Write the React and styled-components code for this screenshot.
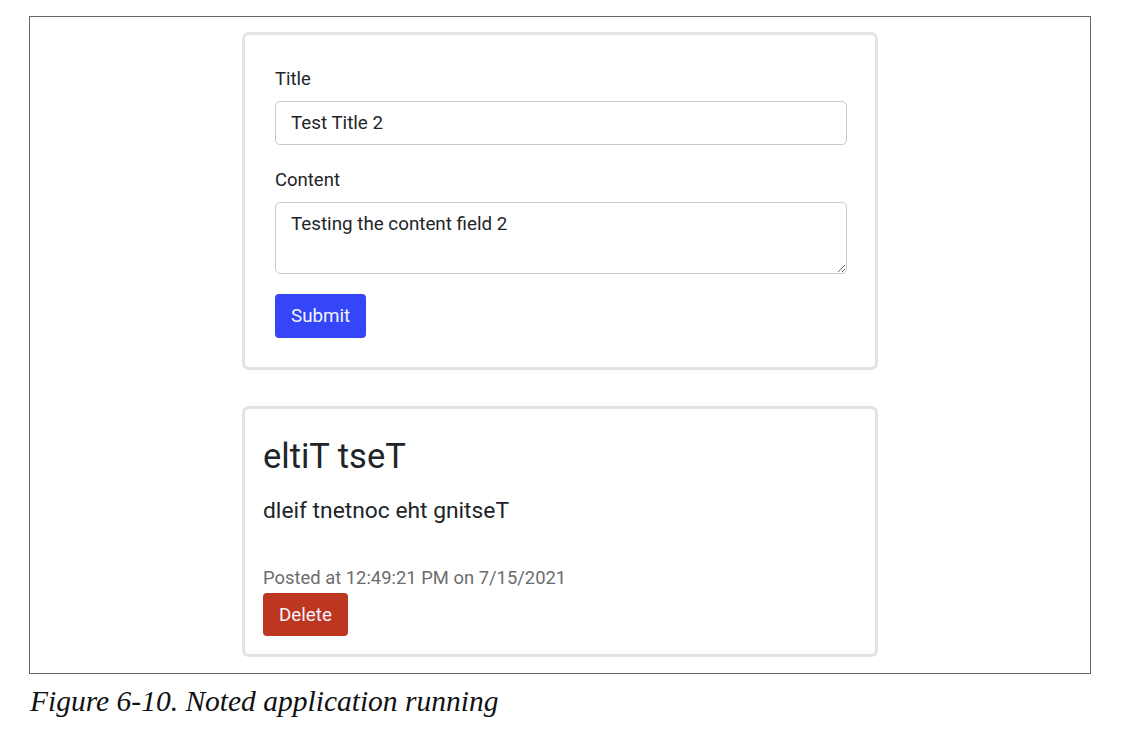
import React from 'react';
import styled, { createGlobalStyle } from 'styled-components';

const GlobalStyle = createGlobalStyle`
  body {
    margin: 0;
    background: #ffffff;
  }
`;

const Page = styled.div`
  padding: 16px 0 0 29px;
`;

const Frame = styled.div`
  width: 1062px;
  height: 658px;
  box-sizing: border-box;
  border: 1px solid #666666;
  display: flex;
  flex-direction: column;
  align-items: center;
  gap: 36px;
  padding-top: 15px;
  font-family: Roboto, 'Helvetica Neue', Arial, sans-serif;
  color: #212529;
`;

const Card = styled.div`
  width: 636px;
  box-sizing: border-box;
  border: 3px solid #e3e3e3;
  border-radius: 7px;
  padding: ${(p) => p.pad};
  display: flex;
  flex-direction: column;
`;

const Label = styled.label`
  font-size: 18.5px;
  line-height: 27px;
  margin-bottom: 8px;
  margin-top: ${(p) => p.top || 0}px;
  padding-top: 1px;
`;

const Input = styled.input`
  height: 44px;
  box-sizing: border-box;
  border: 1px solid #c5c9d0;
  border-radius: 5px;
  padding: 0 15px;
  font-family: inherit;
  font-size: 18.8px;
  color: #212529;
  outline: none;
`;

const TextArea = styled.textarea`
  height: 72px;
  box-sizing: border-box;
  border: 1px solid #c5c9d0;
  border-radius: 5px;
  padding: 9px 15px;
  font-family: inherit;
  font-size: 18.8px;
  line-height: 24px;
  color: #212529;
  resize: vertical;
  outline: none;
`;

const Button = styled.button`
  align-self: flex-start;
  height: ${(p) => p.h}px;
  padding: 0 16px;
  border: none;
  border-radius: 4px;
  background: ${(p) => p.bg};
  color: #f2f4ff;
  font-family: inherit;
  font-size: 18.8px;
  margin-top: ${(p) => p.top || 0}px;
`;

const NoteTitle = styled.h1`
  margin: 0;
  font-size: 34.5px;
  font-weight: 400;
  line-height: 40px;
`;

const NoteBody = styled.p`
  margin: 20px 0 0;
  font-size: 22.8px;
  line-height: 30px;
`;

const Posted = styled.div`
  margin-top: 39px;
  font-size: 18.4px;
  line-height: 26px;
  color: #6c6c6c;
`;

const Caption = styled.div`
  margin: 7px 0 0 1px;
  font-family: 'Liberation Serif', 'Times New Roman', serif;
  font-style: italic;
  font-size: 29.5px;
  line-height: 40px;
  color: #111111;
`;

const App = () => {
  return (
    <Page>
      <GlobalStyle />
      <Frame>
        <Card pad='30px 28px 29px 30px'>
          <Label>Title</Label>
          <Input defaultValue='Test Title 2' />
          <Label top={21}>Content</Label>
          <TextArea defaultValue='Testing the content field 2' />
          <Button h={44} bg='#3446f7' top={20}>
            Submit
          </Button>
        </Card>
        <Card pad='27px 18px 18px'>
          <NoteTitle>eltiT tseT</NoteTitle>
          <NoteBody>dleif tnetnoc eht gnitseT</NoteBody>
          <Posted>Posted at 12:49:21 PM on 7/15/2021</Posted>
          <Button h={43} bg='#bd3620' top={2}>
            Delete
          </Button>
        </Card>
      </Frame>
      <Caption>Figure 6-10. Noted application running</Caption>
    </Page>
  );
};

export default App;
